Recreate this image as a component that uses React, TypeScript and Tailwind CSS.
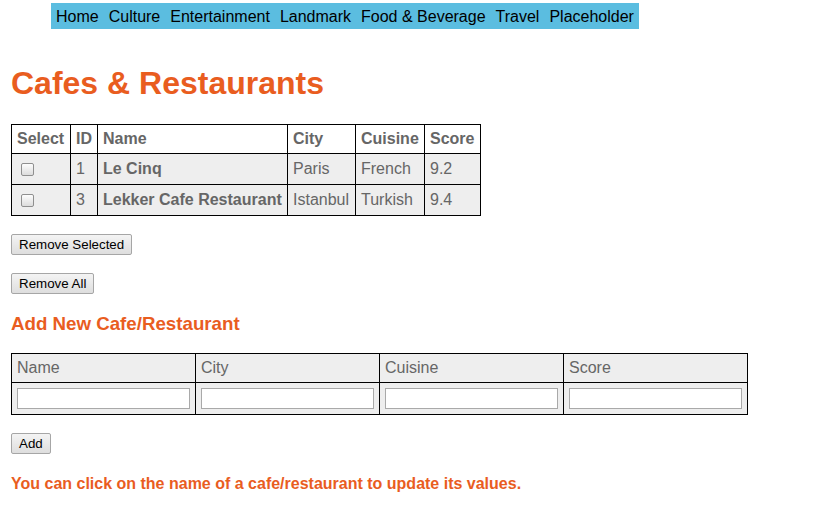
import React from "react";

const ORANGE = "text-[#e95d1f]";

function Btn({ children, className = "" }: { children: React.ReactNode; className?: string }) {
  return (
    <button
      className={`block h-[21px] px-[7px] text-[13.33px] leading-[16px] text-black border border-[#a6a6a6] rounded-[2px] bg-gradient-to-b from-[#f4f4f4] to-[#dedede] ${className}`}
    >
      {children}
    </button>
  );
}

function Check() {
  return (
    <span className="block ml-[4px] w-[13px] h-[13px] rounded-[2px] border border-[#8f8f8f] bg-gradient-to-b from-[#fdfdfd] to-[#dcdcdc]" />
  );
}

export default function App() {
  const rows = [
    { id: 1, name: "Le Cinq", city: "Paris", cuisine: "French", score: "9.2" },
    { id: 3, name: "Lekker Cafe Restaurant", city: "Istanbul", cuisine: "Turkish", score: "9.4" },
  ];
  const th = "border border-black px-[5px] text-left align-middle font-bold";
  const td = "border border-black px-[5px] text-left align-middle bg-[#eeeeee]";
  return (
    <div className="w-[839px] h-[511px] bg-white overflow-hidden text-[16px] leading-[18px]" style={{ fontFamily: '"Liberation Sans", Arial, sans-serif' }}>
      <nav className="mt-[3px] ml-[51px] inline-flex h-[26px] pt-[5px] pb-[3px] items-start bg-[#5bbde0] text-black">
        {["Home", "Culture", "Entertainment", "Landmark", "Food & Beverage", "Travel", "Placeholder"].map((t) => (
          <span key={t} className="px-[5px]">{t}</span>
        ))}
      </nav>
      <div className="pl-[11px]">
        <h1 className={`mt-[36px] text-[32px] leading-[37px] font-bold ${ORANGE}`}>Cafes &amp; Restaurants</h1>
        <table className="mt-[22px] border-collapse table-fixed w-[469px] text-[#666666]">
          <colgroup>
            <col className="w-[59px]" />
            <col className="w-[27px]" />
            <col className="w-[190px]" />
            <col className="w-[68px]" />
            <col className="w-[69px]" />
            <col className="w-[56px]" />
          </colgroup>
          <thead>
            <tr className="h-[29px]">
              <th className={th}>Select</th>
              <th className={th}>ID</th>
              <th className={th}>Name</th>
              <th className={th}>City</th>
              <th className={th}>Cuisine</th>
              <th className={th}>Score</th>
            </tr>
          </thead>
          <tbody>
            {rows.map((r) => (
              <tr key={r.id} className="h-[31px]">
                <td className={td}><Check /></td>
                <td className={td}>{r.id}</td>
                <td className={`${td} font-bold whitespace-nowrap`}>{r.name}</td>
                <td className={td}>{r.city}</td>
                <td className={td}>{r.cuisine}</td>
                <td className={td}>{r.score}</td>
              </tr>
            ))}
          </tbody>
        </table>
        <Btn className="mt-[18px]">Remove Selected</Btn>
        <Btn className="mt-[18px]">Remove All</Btn>
        <h3 className={`mt-[19px] text-[18.72px] leading-[22px] font-bold ${ORANGE}`}>Add New Cafe/Restaurant</h3>
        <table className="mt-[18px] border-collapse table-fixed w-[736px] text-[#666666]">
          <colgroup>
            <col className="w-[184px]" />
            <col className="w-[184px]" />
            <col className="w-[184px]" />
            <col className="w-[184px]" />
          </colgroup>
          <tbody>
            <tr className="h-[29px]">
              {["Name", "City", "Cuisine", "Score"].map((h) => (
                <td key={h} className={td}>{h}</td>
              ))}
            </tr>
            <tr className="h-[32px]">
              {["n", "c", "q", "s"].map((k) => (
                <td key={k} className={td}>
                  <input className="block w-full h-[21px] bg-white border border-[#a9a9a9] text-[13.33px] px-[2px]" />
                </td>
              ))}
            </tr>
          </tbody>
        </table>
        <Btn className="mt-[18px]">Add</Btn>
        <p className={`mt-[21px] font-bold ${ORANGE}`}>You can click on the name of a cafe/restaurant to update its values.</p>
      </div>
    </div>
  );
}
